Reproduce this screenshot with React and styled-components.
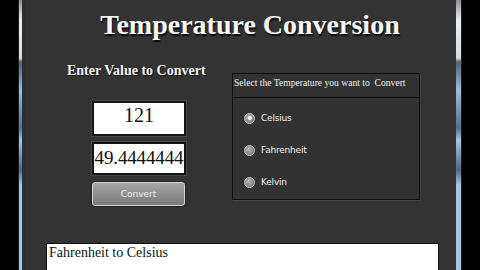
import React from "react";
import styled, { createGlobalStyle } from "styled-components";

const Global = createGlobalStyle`
  html, body { margin: 0; padding: 0; background: #000; }
  body { width: 480px; height: 270px; overflow: hidden; font-family: "Liberation Serif", serif; }
  #root { width: 480px; height: 270px; }
`;

const Screen = styled.div`
  display: flex;
  width: 480px;
  height: 270px;
  background: #000;
  overflow: hidden;
`;

const Gutter = styled.div`
  width: ${(p) => p.$w}px;
  flex: none;
  background: #000;
`;

const Frame = styled.div`
  flex: none;
  width: ${(p) => p.$w}px;
  display: flex;
  flex-direction: ${(p) => (p.$side === "left" ? "row" : "row-reverse")};
  background: #2c2f33;
`;

const FrameEdge = styled.div`
  width: 1px;
  background: #1c1e20;
`;

const FrameStripe = styled.div`
  width: ${(p) => p.$w}px;
  background: linear-gradient(
    to bottom,
    #8e9296 0px,
    #e9eef2 20px,
    #d8dde2 58px,
    #556070 62px,
    #9fbcd8 90px,
    #5a6f86 128px,
    #a9c4de 140px,
    #56687d 170px,
    #a8c4de 185px,
    #a8c4de 270px
  );
`;

const Content = styled.div`
  flex: 1;
  background: #333333;
  display: flex;
  flex-direction: column;
  padding-top: 11px;
  overflow: hidden;
`;

const Title = styled.h1`
  margin: 0;
  padding-left: 19px;
  text-align: center;
  font-family: "Liberation Serif", "Times New Roman", serif;
  font-weight: bold;
  font-size: 28px;
  line-height: 28px;
  color: #f6f6f6;
  text-shadow: 1px 2px 1px #0c0c0c;
`;

const MainRow = styled.div`
  display: flex;
  align-items: flex-start;
  margin-top: 25px;
  padding-left: 42px;
  gap: 20px;
`;

const LeftColumn = styled.div`
  width: 145px;
  display: flex;
  flex-direction: column;
`;

const Label = styled.div`
  font-family: "Liberation Serif", serif;
  font-weight: bold;
  font-size: 14px;
  line-height: 14px;
  color: #f2f2f2;
  white-space: nowrap;
  text-shadow: 1px 1px 1px #111;
`;

const Fields = styled.div`
  display: flex;
  flex-direction: column;
  margin-top: 23px;
  margin-left: 25px;
  width: 94px;
  gap: 6px;
`;

const ValueBox = styled.div`
  box-sizing: border-box;
  width: 94px;
  height: ${(p) => p.$h}px;
  background: #fff;
  border: 2px solid #141414;
  outline: 1px solid #4a4a4a;
  font-family: "Liberation Serif", serif;
  font-size: ${(p) => p.$size}px;
  line-height: 22px;
  padding-top: ${(p) => p.$pt}px;
  color: #111;
  text-align: center;
  white-space: nowrap;
  overflow: hidden;
  letter-spacing: ${(p) => (p.$tight ? "-0.15px" : "0")};
`;

const ConvertButton = styled.button`
  box-sizing: border-box;
  margin-top: 1px;
  width: 93px;
  height: 24px;
  border: 1px solid #d6d6d6;
  border-radius: 3px;
  box-shadow: 0 0 0 1px #222;
  background: linear-gradient(to bottom, #a6a6a6 0%, #8f8f8f 50%, #7a7a7a 100%);
  color: #ececec;
  font-family: "DejaVu Sans", "Liberation Sans", sans-serif;
  font-size: 9px;
  padding: 0;
  cursor: pointer;
`;

const Panel = styled.div`
  margin-top: 9px;
  box-sizing: border-box;
  width: 188px;
  height: 127px;
  border: 1px solid #0e0e0e;
  box-shadow: 1px 1px 0 #444;
  background: #323232;
  display: flex;
  flex-direction: column;
`;

const PanelHeader = styled.div`
  height: 24px;
  box-sizing: border-box;
  border-bottom: 1px solid #0e0e0e;
  padding: 2px 0 0 1px;
  font-family: "Liberation Serif", serif;
  font-size: 9.6px;
  line-height: 14px;
  color: #f0f0f0;
  white-space: pre;
`;

const RadioList = styled.div`
  display: flex;
  flex-direction: column;
  padding: 14px 0 0 11px;
  gap: 20px;
`;

const RadioRow = styled.label`
  display: flex;
  align-items: center;
  height: 12px;
  gap: 6px;
  font-family: "DejaVu Sans", "Liberation Sans", sans-serif;
  font-size: 9px;
  color: #ededed;
  letter-spacing: -0.2px;
`;

const RadioDot = styled.span`
  box-sizing: border-box;
  width: 11px;
  height: 11px;
  border-radius: 50%;
  border: 1px solid #c8c8c8;
  background: radial-gradient(circle at 40% 35%, #b4b4b4 0%, #8a8a8a 60%, #707070 100%);
  display: flex;
  align-items: center;
  justify-content: center;
  &::after {
    content: "";
    width: 4px;
    height: 4px;
    border-radius: 50%;
    background: ${(p) => (p.$checked ? "#ffffff" : "transparent")};
  }
`;

const ResultBox = styled.div`
  margin: 37px 0 0 21px;
  width: 393px;
  flex: 1;
  box-sizing: border-box;
  background: #fff;
  border: 1px solid #111;
  border-bottom: none;
  padding: 1px 0 0 2px;
  font-family: "Liberation Serif", serif;
  font-size: 14px;
  line-height: 16px;
  color: #111;
`;

const options = [
  { label: "Celsius", checked: true },
  { label: "Fahrenheit", checked: false },
  { label: "Kelvin", checked: false },
];

export default function App() {
  return (
    <>
      <Global />
      <Screen>
        <Gutter $w={18} />
        <Frame $w={7} $side="left">
          <FrameEdge />
          <FrameStripe $w={3} />
        </Frame>
        <Content>
          <Title>Temperature Conversion</Title>
          <MainRow>
            <LeftColumn>
              <Label>Enter Value to Convert</Label>
              <Fields>
                <ValueBox $h={35} $size={20} $pt={1}>121</ValueBox>
                <ValueBox $h={33} $size={19} $pt={3} $tight>49.4444444</ValueBox>
                <ConvertButton type="button">Convert</ConvertButton>
              </Fields>
            </LeftColumn>
            <Panel>
              <PanelHeader>{"Select the Temperature you want to  Convert"}</PanelHeader>
              <RadioList>
                {options.map((o) => (
                  <RadioRow key={o.label}>
                    <RadioDot $checked={o.checked} />
                    {o.label}
                  </RadioRow>
                ))}
              </RadioList>
            </Panel>
          </MainRow>
          <ResultBox>Fahrenheit to Celsius</ResultBox>
        </Content>
        <Frame $w={6} $side="right">
          <FrameEdge />
          <FrameStripe $w={5} />
        </Frame>
        <Gutter $w={18} />
      </Screen>
    </>
  );
}
